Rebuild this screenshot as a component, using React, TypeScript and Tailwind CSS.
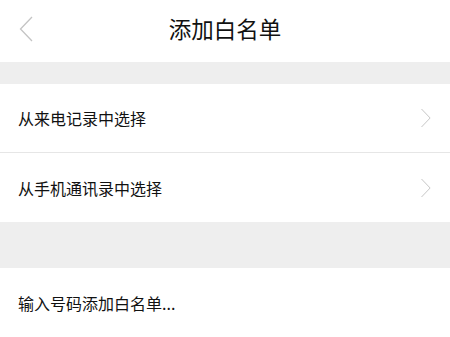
import React from 'react';

const font = { fontFamily: '"Noto Sans CJK SC", "Noto Sans", sans-serif' };

const Chevron = ({ dir }: { dir: 'left' | 'right' }) => (
  <svg width="14" height="26" viewBox="0 0 14 26" fill="none">
    <path
      d={dir === 'left' ? 'M13 1 L1.5 13 L13 25' : 'M1 1 L12.5 13 L1 25'}
      stroke="#c4c4c4"
      strokeWidth="1.3"
    />
  </svg>
);

const Row = ({ label, arrow, border }: { label: string; arrow?: boolean; border?: boolean }) => (
  <div
    className={`flex h-[69px] items-center justify-between bg-white pl-[18px] pr-[17px] ${
      border ? 'border-b border-[#e6e6e6]' : ''
    }`}
  >
    <span className="text-[16px] text-[#111]">{label}</span>
    {arrow && (
      <span className="scale-75">
        <Chevron dir="right" />
      </span>
    )}
  </div>
);

export default function App() {
  return (
    <div className="h-[337px] w-[450px] overflow-hidden bg-white" style={font}>
      <div className="relative flex h-[62px] items-center justify-center pb-[4px]">
        <button className="absolute left-[19px] top-[16px]">
          <Chevron dir="left" />
        </button>
        <h1 className="text-[22.5px] text-[#111]">添加白名单</h1>
      </div>
      <div className="h-[22px] bg-[#eeeeee]" />
      <Row label="从来电记录中选择" arrow border />
      <Row label="从手机通讯录中选择" arrow />
      <div className="h-[46px] bg-[#eeeeee]" />
      <Row label="输入号码添加白名单..." />
    </div>
  );
}
